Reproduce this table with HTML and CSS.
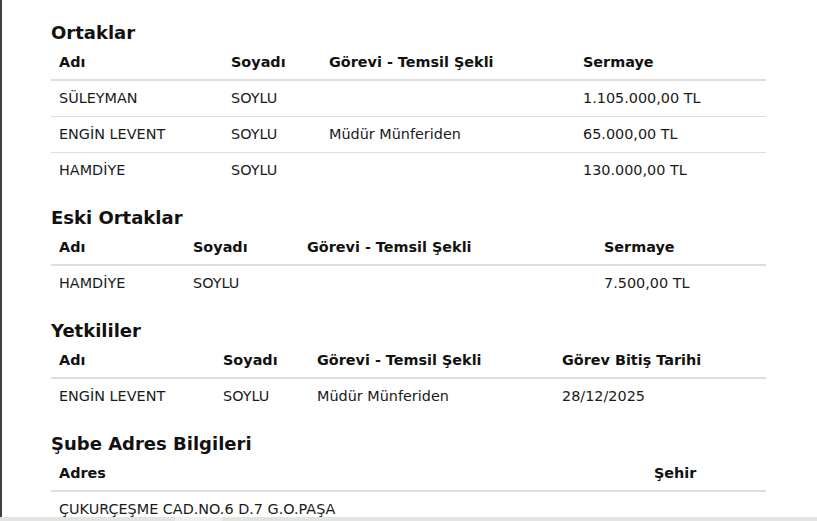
FILE: index.html
```html
<!DOCTYPE html>
<html lang="tr">
<head>
<meta charset="utf-8">
<title>Ortaklar</title>
<link rel="stylesheet" href="styles.css">
</head>
<body>
<div class="frame">
  <main class="page">
    <section class="block">
      <h4 class="block-title">Ortaklar</h4>
      <table class="grid">
        <colgroup><col class="w172"><col class="w98"><col class="w254"><col class="w191"></colgroup>
        <thead><tr><th>Adı</th><th>Soyadı</th><th>Görevi - Temsil Şekli</th><th>Sermaye</th></tr></thead>
        <tbody>
          <tr><td>SÜLEYMAN</td><td>SOYLU</td><td></td><td>1.105.000,00 TL</td></tr>
          <tr><td>ENGİN LEVENT</td><td>SOYLU</td><td>Müdür Münferiden</td><td>65.000,00 TL</td></tr>
          <tr><td>HAMDİYE</td><td>SOYLU</td><td></td><td>130.000,00 TL</td></tr>
        </tbody>
      </table>
    </section>
    <section class="block">
      <h4 class="block-title">Eski Ortaklar</h4>
      <table class="grid">
        <colgroup><col class="w134"><col class="w114"><col class="w297"><col class="w170"></colgroup>
        <thead><tr><th>Adı</th><th>Soyadı</th><th>Görevi - Temsil Şekli</th><th>Sermaye</th></tr></thead>
        <tbody>
          <tr><td>HAMDİYE</td><td>SOYLU</td><td></td><td>7.500,00 TL</td></tr>
        </tbody>
      </table>
    </section>
    <section class="block">
      <h4 class="block-title">Yetkililer</h4>
      <table class="grid">
        <colgroup><col class="w164"><col class="w94"><col class="w245"><col class="w212"></colgroup>
        <thead><tr><th>Adı</th><th>Soyadı</th><th>Görevi - Temsil Şekli</th><th>Görev Bitiş Tarihi</th></tr></thead>
        <tbody>
          <tr><td>ENGİN LEVENT</td><td>SOYLU</td><td>Müdür Münferiden</td><td>28/12/2025</td></tr>
        </tbody>
      </table>
    </section>
    <section class="block">
      <h4 class="block-title">Şube Adres Bilgileri</h4>
      <table class="grid">
        <colgroup><col class="w595"><col class="w120"></colgroup>
        <thead><tr><th>Adres</th><th>Şehir</th></tr></thead>
        <tbody>
          <tr><td>ÇUKURÇEŞME CAD.NO.6 D.7 G.O.PAŞA</td><td></td></tr>
        </tbody>
      </table>
    </section>
  </main>
  <div class="bottom-strip"><span class="strip-light"></span></div>
</div>
</body>
</html>
```
FILE: styles.css
```css
html, body {
  margin: 0;
  padding: 0;
  height: 100%;
  background: #ffffff;
}
body {
  font-family: "DejaVu Sans", Verdana, sans-serif;
  font-size: 14.4px;
  color: #1a1a1a;
  overflow: hidden;
}
.frame {
  height: 521px;
  display: flex;
  flex-direction: column;
}
.page {
  flex: 1;
  min-height: 0;
  overflow: hidden;
  border-left: 2px solid #3f3f3f;
  padding: 22px 51px 0 49px;
}
.block-title {
  margin: 0;
  font-size: 18px;
  line-height: 21px;
  font-weight: bold;
  color: #111;
}
.grid {
  width: 715px;
  table-layout: fixed;
  border-collapse: collapse;
  margin-bottom: 19px;
}
.grid th {
  text-align: left;
  font-weight: bold;
  padding: 10px 8px 7px;
  line-height: 19px;
  border-bottom: 2px solid #dddddd;
  color: #111;
}
.grid td {
  padding: 8px;
  line-height: 19px;
  border-top: 1px solid #dddddd;
  white-space: nowrap;
}
.w94 { width: 94px; }
.w98 { width: 98px; }
.w114 { width: 114px; }
.w120 { width: 120px; }
.w134 { width: 134px; }
.w164 { width: 164px; }
.w170 { width: 170px; }
.w172 { width: 172px; }
.w191 { width: 191px; }
.w212 { width: 212px; }
.w245 { width: 245px; }
.w254 { width: 254px; }
.w297 { width: 297px; }
.w595 { width: 595px; }
.bottom-strip {
  height: 4px;
  flex: none;
  background: #e2e4e1;
  display: flex;
  padding-left: 175px;
}
.strip-light {
  width: 47px;
  background: #eef0ed;
}
```
